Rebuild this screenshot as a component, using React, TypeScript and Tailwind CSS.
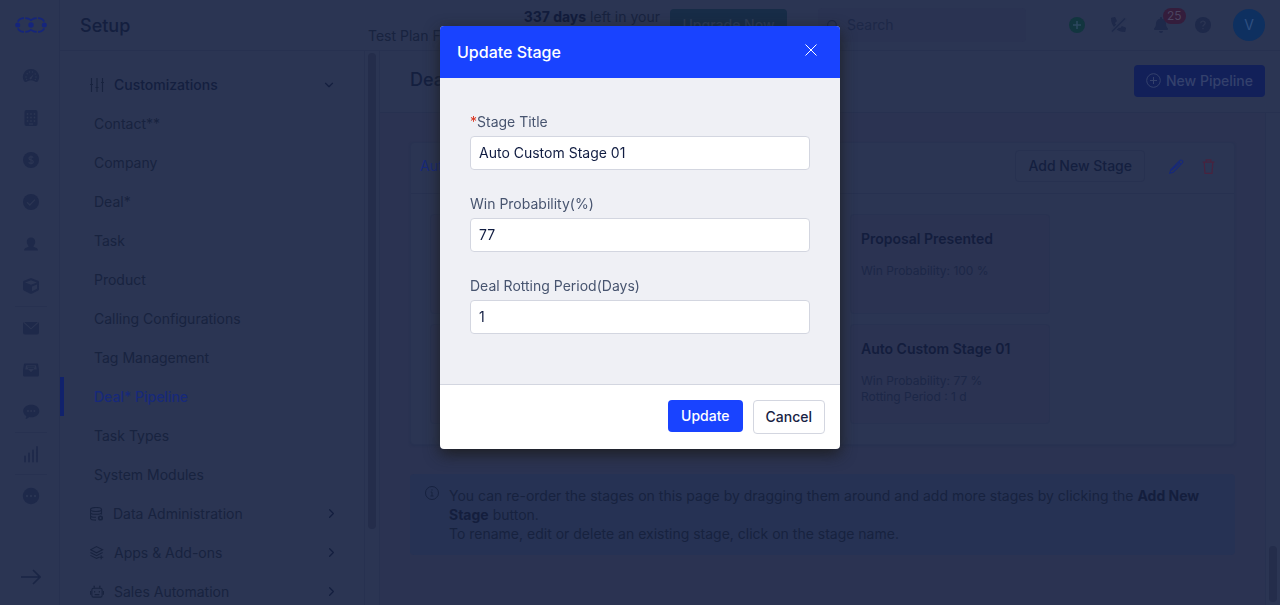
import React from "react";
import { FaBell, FaCube, FaPhoneAlt } from "react-icons/fa";
import { ChevronDown, ChevronRight, Search } from "lucide-react";

const ink = "#1e294a";
const paper = "#2b3553";

function Logo() {
  return (
    <svg width="32" height="16" viewBox="0 0 32 16" fill="none" stroke="#15257c" strokeWidth="1.700">
      <path d="M2.800 4.600Q4.500 1.200 9 1.200M10.300 1.200Q13.500 1.200 16 3.200Q18.500 1.200 21.700 1.200M23 1.200Q27.500 1.200 29.200 4.600" />
      <path d="M2.800 11.400Q4.500 14.800 9 14.800M10.300 14.800Q13.500 14.800 16 12.800Q18.500 14.800 21.700 14.800M23 14.800Q27.500 14.800 29.200 11.400" />
      <g fill="#15257c" stroke="none">
        <circle cx="2.700" cy="8" r="2.500" />
        <circle cx="16" cy="8" r="2.700" />
        <circle cx="29.300" cy="8" r="2.500" />
      </g>
    </svg>
  );
}

const railIcons: { label: string; art: React.ReactNode; divider?: boolean }[] = [
  {
    label: "Dashboard",
    art: (
      <>
        <path d="M8 1a8 8 0 0 0-7 12c.4.900 1.200 1.300 2 1L5 13q3-1.400 6 0l2 1c.8.300 1.600-.1 2-1A8 8 0 0 0 8 1z" fill={ink} />
        <g fill={paper}>
          <circle cx="3" cy="9" r=".8" /><circle cx="4.200" cy="5.800" r=".8" /><circle cx="6.500" cy="4" r=".8" />
          <circle cx="9.500" cy="4" r=".8" /><circle cx="13" cy="9" r=".8" /><circle cx="12.200" cy="6" r=".8" /><circle cx="3.700" cy="11.500" r=".7" /><circle cx="12.300" cy="11.500" r=".7" />
          <path d="M10.800 6.200 8.700 10.200a1.100 1.100 0 1 1-1.400-1z" />
        </g>
      </>
    ),
  },
  {
    label: "Companies",
    art: (
      <>
        <rect x="1.500" y="0" width="13" height="16" rx="2" fill={ink} />
        <g fill={paper}>
          {[4, 7.500, 11].map((y) => [4.500, 8, 11.500].map((x) => <circle key={`${x}-${y}`} cx={x} cy={y} r=".9" />))}
          <rect x="6" y="13.400" width="4" height="1.200" />
        </g>
      </>
    ),
  },
  {
    label: "Deals",
    art: (
      <>
        <circle cx="8" cy="8" r="8" fill={ink} />
        <path d="M10.300 5.600Q9.500 4.700 8 4.700q-2 0-2 1.600T8 8t2.200 1.700T8 11.400q-1.700 0-2.400-1M8 3.400v9.200" fill="none" stroke={paper} strokeWidth="1.200" />
      </>
    ),
  },
  {
    label: "Tasks",
    art: (
      <>
        <circle cx="8" cy="8" r="8" fill={ink} />
        <path d="m4 8.200 2.800 2.800L12 5.600" fill="none" stroke={paper} strokeWidth="1.300" />
      </>
    ),
  },
  {
    label: "Contacts",
    art: <path d="M8 1.500c2.600 0 4.200 1.800 4.200 4.300 0 1.700-.7 3.200-1.700 4.100v.8l3 1.200c.9.400 1.400 1.200 1.400 2.600H1.100c0-1.400.5-2.200 1.400-2.600l3-1.200v-.8C4.500 9 3.800 7.500 3.800 5.800 3.800 3.300 5.400 1.500 8 1.500z" fill={ink} />,
  },
  { label: "Products", art: <FaCube size={16} color={ink} />, divider: true },
  {
    label: "Email",
    art: (
      <>
        <rect x="0" y="2" width="16" height="12.500" rx="2" fill={ink} />
        <path d="m1 2.500 7 6.300 7-6.300" fill="none" stroke={paper} strokeWidth="1.100" />
      </>
    ),
  },
  {
    label: "Inbox",
    art: (
      <>
        <path d="M2.200 1.500h11.600c.7 0 1.200.4 1.300 1L16 8v5c0 .9-.6 1.500-1.500 1.500h-13C.6 14.500 0 13.900 0 13V8l.9-5.500c.1-.6.600-1 1.300-1z" fill={ink} />
        <path d="M3 3.200h10l.8 4.300h-3.300L8 10.300 5.500 7.500H2.200z" fill={paper} />
        <path d="M4.200 4.800h7.600M5 6.400h6" stroke={ink} strokeWidth=".9" />
      </>
    ),
  },
  {
    label: "Messages",
    divider: true,
    art: (
      <>
        <path d="M8.300.8c4.500 0 8 2.700 8 6.200s-3.500 6.300-8 6.300c-.8 0-1.500-.1-2.200-.2-.9.900-2 1.700-3.600 2 .6-1 .9-2 .8-3C1.500 11 .2 9.200.2 7 .2 3.500 3.800.8 8.300.8z" fill={ink} />
        <g fill={paper}><circle cx="5" cy="7" r="1" /><circle cx="8.200" cy="7" r="1" /><circle cx="11.400" cy="7" r="1" /></g>
      </>
    ),
  },
  {
    label: "Reports",
    divider: true,
    art: <path d="M2 15.500v-5M6 15.500V7.500M10 15.500V4.500M14 15.500V1" stroke={ink} strokeWidth="1.800" strokeLinecap="round" />,
  },
  {
    label: "More",
    art: (
      <>
        <circle cx="8" cy="8" r="8.200" fill={ink} />
        <g fill={paper}><circle cx="4" cy="8" r="1.200" /><circle cx="8" cy="8" r="1.200" /><circle cx="12" cy="8" r="1.200" /></g>
      </>
    ),
  },
];

function Rail() {
  return (
    <nav aria-label="Main" className="flex w-[60px] shrink-0 flex-col items-center border-r border-[#273150] bg-[#2b3553] pl-0.5">
      <a href="#home" aria-label="Home" className="flex h-[55px] shrink-0 items-center pb-1.5">
        <Logo />
      </a>
      {railIcons.map((item) => (
        <a
          key={item.label}
          href={`#${item.label.toLowerCase()}`}
          aria-label={item.label}
          className={`flex h-[42px] w-8 shrink-0 items-center justify-center border-b ${item.divider ? "border-[#273150]" : "border-transparent"}`}
        >
          <svg width="16" height="16" viewBox="0 0 16 16" overflow="visible">{item.art}</svg>
        </a>
      ))}
      <button aria-label="Expand menu" className="mt-auto pb-5">
        <svg width="20" height="16" viewBox="0 0 20 16" fill="none" stroke="#1a2545" strokeWidth="1.600">
          <path d="M0 8h19M12 1l7 7-7 7" />
        </svg>
      </button>
    </nav>
  );
}

const stroke = { fill: "none", stroke: "#18233f", strokeWidth: 1.1 };

const SlidersIcon = () => (
  <svg width="14" height="14" viewBox="0 0 14 14" {...stroke}>
    <path d="M1.500 0v14M7 0v14M12.500 0v14M0 6.500h3M5.500 9.500h3M11 4.500h3" />
  </svg>
);
const DatabaseIcon = () => (
  <svg width="13" height="14" viewBox="0 0 13 14" {...stroke}>
    <ellipse cx="6" cy="2.500" rx="5.500" ry="2" />
    <path d="M.5 2.500v8.800c0 1 2.500 1.800 5.500 1.800M11.500 2.500v5M.5 5.500c0 1 2.500 1.800 5.500 1.800s5.500-.8 5.500-1.800M.5 8.500c0 1 2.500 1.800 5.500 1.800" />
    <circle cx="10.500" cy="11" r="1.800" strokeWidth="1.600" />
  </svg>
);
const LayersIcon = () => (
  <svg width="14" height="14" viewBox="0 0 15 15" {...stroke}>
    <path d="m7 .7 6.500 3.300L7 7.300.5 4zM.5 7 7 10.300 13.500 7M.5 10 7 13.300l2.500-1.200M12 9.800v4.400M9.800 12h4.400" />
  </svg>
);
const RobotIcon = () => (
  <svg width="14" height="14" viewBox="0 0 15 14" {...stroke}>
    <rect x="2" y="3" width="11" height="9.500" rx="1.800" />
    <path d="M4.500 3V.8M10.500 3V.8M3.700.8h1.600M9.700.8h1.600M.6 6v4M14.400 6v4M5 9.800h5M5 6v1.600M10 6v1.600" />
  </svg>
);

const modules = [
  "Contact**", "Company", "Deal*", "Task", "Product", "Calling Configurations",
  "Tag Management", "Deal* Pipeline", "Task Types", "System Modules",
];
const groups = [
  { label: "Data Administration", icon: <DatabaseIcon /> },
  { label: "Apps & Add-ons", icon: <LayersIcon /> },
  { label: "Sales Automation", icon: <RobotIcon /> },
];

function SetupMenu() {
  return (
    <aside className="flex w-[320px] shrink-0 border-r border-[#273150]">
      <nav aria-label="Setup" className="min-w-0 flex-1 pt-3.5">
        <button className="flex h-[39px] w-full items-center gap-2.5 pr-7 pl-[30px] font-medium text-[#141f3f]">
          <SlidersIcon />
          <span className="flex-1 text-left">Customizations</span>
          <ChevronDown size={14} />
        </button>
        {modules.map((name) => (
          <a
            key={name}
            href="#module"
            className={`flex h-[39px] items-center border-l-4 pl-[30px] ${name === "Deal* Pipeline" ? "border-[#11226c] font-medium text-[#17297a]" : "border-transparent"}`}
          >
            {name}
          </a>
        ))}
        {groups.map((g) => (
          <button key={g.label} className="flex h-[39px] w-full items-center gap-2.5 pr-[25px] pl-[30px]">
            {g.icon}
            <span className="flex-1 text-left">{g.label}</span>
            <ChevronRight size={15} color="#141f3f" />
          </button>
        ))}
      </nav>
      <div className="w-[15px] border-l border-[#273150] px-[3px] pt-0.5">
        <div className="h-[476px] w-2 rounded-full bg-[#242d4b]" />
      </div>
    </aside>
  );
}

function Header() {
  return (
    <header className="flex h-[51px] shrink-0 items-center border-b border-[#273150] pr-[15px] pl-5">
      <h1 className="pt-0.5 text-lg font-medium text-[#141f3f]">Setup</h1>
      <div className="ml-auto flex items-center">
        <div className="flex w-[292px] flex-col pt-0.5 leading-[19px]">
          <span className="text-right"><b className="font-bold text-[#121c3c]">337 days</b> left in your</span>
          <span>Test Plan For</span>
        </div>
        <button className="ml-2.5 h-8 w-[117px] rounded bg-[#172c47] font-medium text-[#2a3a55]">Upgrade Now</button>
        <label className="mx-[31px] flex h-[34px] w-[208px] items-center gap-2 rounded bg-[#2a3352] pl-2">
          <Search size={13} className="shrink-0" color="#1c2747" />
          <input aria-label="Search" placeholder="Search" className="w-full bg-transparent outline-none placeholder:text-[#1d2848]" />
        </label>
        <div className="flex items-center gap-[26px] pl-3">
          <button aria-label="Add">
            <svg width="16" height="16" viewBox="0 0 16 16"><circle cx="8" cy="8" r="8" fill="#12353f" /><path d="M8 4v8M4 8h8" stroke="#2d4860" strokeWidth="1.500" /></svg>
          </button>
          <button aria-label="Calling off">
            <svg width="16" height="16" viewBox="0 0 16 16">
              <FaPhoneAlt size={15} color={ink} />
              <path d="M.5 15 15 1" stroke={paper} strokeWidth="4" />
              <path d="M1 14.500 14 1.500" stroke={ink} strokeWidth="1.500" />
            </svg>
          </button>
          <button aria-label="Notifications" className="relative">
            <FaBell size={16} color={ink} />
            <span className="absolute -top-[9px] left-2.5 h-4 rounded-full bg-[#341d3c] px-1 text-xs leading-4 text-[#4b4460]">25</span>
          </button>
          <button aria-label="Help">
            <svg width="16" height="16" viewBox="0 0 16 16"><circle cx="8" cy="8" r="8" fill={ink} /><path d="M5.700 6.200Q5.900 4.200 8 4.200t2.200 1.900Q10.200 7.200 9 7.900T8 9.600M8 10.900v1.400" fill="none" stroke={paper} strokeWidth="1.300" /></svg>
          </button>
          <button aria-label="Account" className="-ml-1 h-8 w-8 rounded-full bg-[#0e3060] text-[#2f4f80]">V</button>
        </div>
      </div>
    </header>
  );
}

type Stage = { title?: string; lines?: string[] };
const stages: Stage[] = [
  {}, {}, { title: "Proposal Presented", lines: ["Win Probability: 100 %"] },
  {}, {}, { title: "Auto Custom Stage 01", lines: ["Win Probability: 77 %", "Rotting Period : 1 d"] },
];

function Pipelines() {
  return (
    <main className="flex min-w-0 flex-1 flex-col bg-[#2b3352]">
      <div className="flex h-[62px] shrink-0 items-center justify-between border-b border-[#273150] bg-[#2b3553] pr-[15px] pb-0.5 pl-[30px]">
        <h2 className="pb-0.5 text-lg font-medium text-[#141f3f]">Deal* Pipeline</h2>
        <button className="flex h-8 items-center gap-[5px] rounded bg-[#122059] px-3 font-medium text-[#34416c]">
          <svg width="15" height="15" viewBox="0 0 15 15" fill="none" stroke="currentColor"><circle cx="7.500" cy="7.500" r="6.800" /><path d="M7.500 4v7M4 7.500h7" /></svg>
          New Pipeline
        </button>
      </div>
      <div className="flex min-h-0 flex-1">
        <div className="min-w-0 flex-1 px-[30px] pt-[29px]">
          <section className="rounded border border-[#283251] bg-[#2b3553] shadow-[0_1px_2px_#273150]">
            <div className="flex h-[51px] items-center border-b border-[#273150] px-[9px] pb-1">
              <a href="#pipeline" className="flex-1 text-[#17297a]">Auto</a>
              <button className="h-8 rounded border border-[#273150] px-3 font-medium text-[#141f3f]">Add New Stage</button>
              <button aria-label="Edit pipeline" className="ml-6">
                <svg width="15" height="15" viewBox="0 0 15 15" fill="none" stroke="#17297a" strokeWidth="1.100"><path d="m.7 14.300 1-3.500L11 1.500q1-1 2.200.1t.2 2.300L4.200 13.200zM9.700 2.800l2.500 2.500M2.300 11.500 11 3.900" /></svg>
              </button>
              <button aria-label="Delete pipeline" className="mr-2.5 ml-[18px]">
                <svg width="13" height="15" viewBox="0 0 13 15" fill="none" stroke="#48233f" strokeWidth="1.200"><path d="M.7 3.200h11.600M4.200 3V.8h4.600V3M2.200 3.500l.8 10.800h7l.8-10.800" /></svg>
              </button>
            </div>
            <div className="flex flex-wrap gap-2.5 px-[19px] py-5">
              {stages.map((s, i) => (
                <article key={i} className="h-[100px] w-[200px] rounded border border-[#283251] bg-[#2b3352] px-2.5 pt-3.5">
                  <h3 className="font-semibold leading-5 text-[#131d3d]">{s.title}</h3>
                  <div className="pt-3.5 text-xs leading-4 text-[#1c2747]">
                    {s.lines?.map((l) => <p key={l}>{l}</p>)}
                  </div>
                </article>
              ))}
            </div>
          </section>
          <section className="mt-[29px] flex gap-2.5 rounded bg-[#263254] py-3 pr-5 pl-[15px] text-[#17223f]">
            <svg className="shrink-0" width="14" height="14" viewBox="0 0 14 14" fill="none" stroke="currentColor"><circle cx="7" cy="7" r="6.500" /><path d="M5.700 6H7v4M5.500 10h3M7 3.300v1.300" /></svg>
            <p className="leading-[19px]">
              You can re-order the stages on this page by dragging them around and add more stages by clicking the{" "}
              <b className="font-bold text-[#141e3d]">Add New Stage</b> button.
              <br />
              To rename, edit or delete an existing stage, click on the stage name.
            </p>
          </section>
        </div>
        <div className="flex w-[15px] flex-col justify-end border-l border-[#273150] bg-[#2b3553] px-[3px] pb-[3px]">
          <div className="h-14 w-2 rounded-full bg-[#242d4b]" />
        </div>
      </div>
    </main>
  );
}

const fields = [
  { id: "title", label: "Stage Title", value: "Auto Custom Stage 01", required: true },
  { id: "probability", label: "Win Probability(%)", value: "77" },
  { id: "rotting", label: "Deal Rotting Period(Days)", value: "1" },
];

function UpdateStageDialog() {
  return (
    <div className="fixed inset-0 flex items-start justify-center pt-[26px]">
      <form
        role="dialog"
        aria-labelledby="dialog-title"
        onSubmit={(e) => e.preventDefault()}
        className="w-[400px] overflow-hidden rounded bg-white shadow-[0_5px_15px_rgba(29,29,29,0.9)]"
      >
        <div className="flex h-[52px] items-center justify-between bg-[#1943ff] pr-[23px] pl-[17px] text-white">
          <h2 id="dialog-title" className="text-base font-medium">Update Stage</h2>
          <button type="button" aria-label="Close" className="pb-1">
            <svg width="12" height="12" viewBox="0 0 12 12" stroke="currentColor"><path d="m.5.5 11 11M11.500.5l-11 11" /></svg>
          </button>
        </div>
        <div className="flex flex-col gap-6 border-b border-[#d3d6e0] bg-[#eff0f5] px-[30px] pt-[34px] pb-[50px]">
          {fields.map((f) => (
            <div key={f.id} className="flex flex-col gap-1">
              <label htmlFor={f.id} className="leading-5 text-[#47546f]">
                {f.required && <span className="text-[#d9301a]">*</span>}
                {f.label}
              </label>
              <input id={f.id} defaultValue={f.value} className="h-[34px] rounded border border-[#d3d6e0] bg-white px-2 pb-0.5 text-[#101c41] outline-none" />
            </div>
          ))}
        </div>
        <div className="flex items-start justify-end gap-2.5 px-[15px] py-[15px]">
          <button type="submit" className="h-8 rounded bg-[#1943ff] px-[13px] font-medium text-white">Update</button>
          <button type="button" className="h-[34px] rounded border border-[#d3d6e0] bg-white px-3 font-medium text-[#172243]">Cancel</button>
        </div>
      </form>
    </div>
  );
}

export default function App() {
  return (
    <div className="flex h-screen overflow-hidden bg-[#2b3553] font-['Inter',sans-serif] text-sm text-[#18233f]">
      <Rail />
      <div className="flex min-w-0 flex-1 flex-col">
        <Header />
        <div className="flex min-h-0 flex-1">
          <SetupMenu />
          <Pipelines />
        </div>
      </div>
      <UpdateStageDialog />
    </div>
  );
}
